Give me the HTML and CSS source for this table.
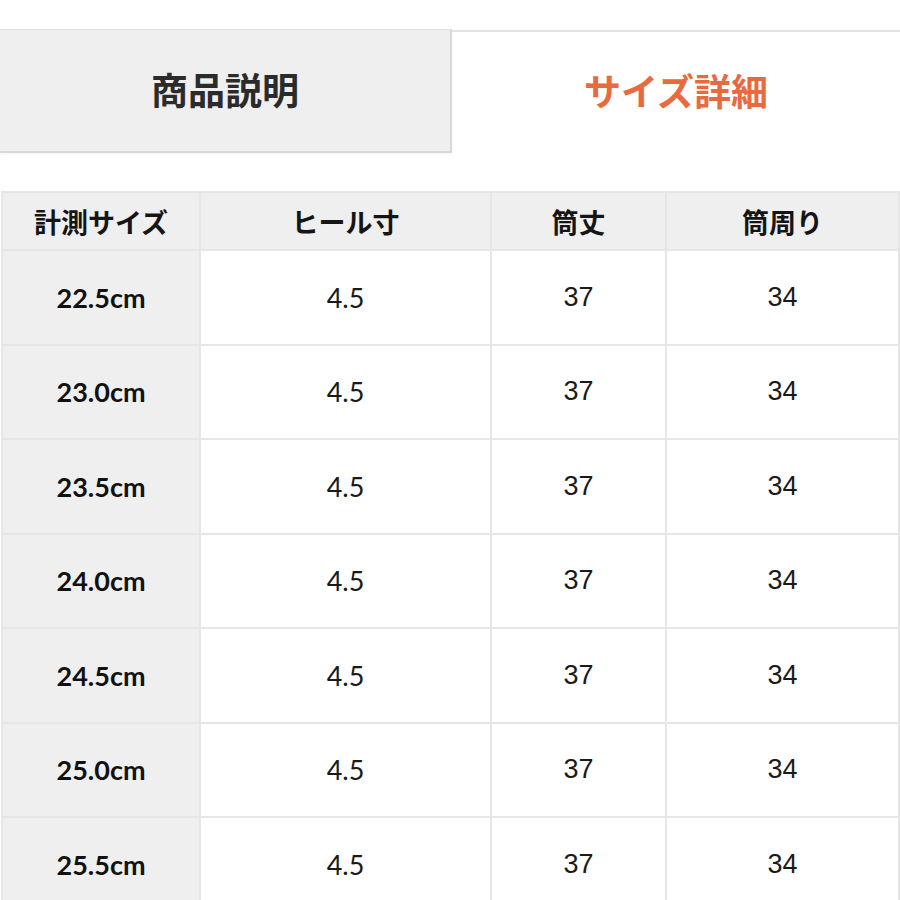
FILE: index.html
```html
<!DOCTYPE html>
<html lang="ja">
<head>
<meta charset="utf-8">
<link rel="stylesheet" href="styles.css">
</head>
<body>
<div class="tabs">
  <div class="tab tab-off">商品説明</div>
  <div class="tab tab-on">サイズ詳細</div>
</div>
<table class="size">
  <colgroup>
    <col class="c1"><col class="c2"><col class="c3"><col class="c4">
  </colgroup>
  <thead>
    <tr><th>計測サイズ</th><th>ヒール寸</th><th>筒丈</th><th>筒周り</th></tr>
  </thead>
  <tbody>
    <tr><th>22.5cm</th><td class="lato">4.5</td><td>37</td><td>34</td></tr>
    <tr><th>23.0cm</th><td class="lato">4.5</td><td>37</td><td>34</td></tr>
    <tr><th>23.5cm</th><td class="lato">4.5</td><td>37</td><td>34</td></tr>
    <tr><th>24.0cm</th><td class="lato">4.5</td><td>37</td><td>34</td></tr>
    <tr><th>24.5cm</th><td class="lato">4.5</td><td>37</td><td>34</td></tr>
    <tr><th>25.0cm</th><td class="lato">4.5</td><td>37</td><td>34</td></tr>
    <tr><th>25.5cm</th><td class="lato">4.5</td><td>37</td><td>34</td></tr>
  </tbody>
</table>
</body>
</html>
```
FILE: styles.css
```css
html, body {
  margin: 0;
  padding: 0;
  background: #fff;
  overflow: hidden;
}
body {
  font-family: "Noto Sans CJK JP", "Noto Sans", sans-serif;
  color: #222;
}
.tabs {
  display: flex;
  margin-top: 29px;
  height: 124px;
}
.tab {
  display: flex;
  align-items: center;
  justify-content: center;
  font-size: 37px;
  font-weight: 700;
  box-sizing: border-box;
  padding-bottom: 4px;
}
.tab-off {
  width: 452px;
  background: #efefef;
  color: #2b2b2b;
  border-top: 1px solid #e2e2e2;
  border-right: 2px solid #d9d9d9;
  border-bottom: 2px solid #d9d9d9;
  box-shadow: 0 1px 2px rgba(0,0,0,0.06);
}
.tab-on {
  flex: 1;
  color: #e96a3f;
  border-top: 2px solid #e2e2e2;
  margin-top: 1px;
  align-self: flex-start;
  height: 123px;
  padding-bottom: 6px;
}
.size {
  margin-top: 38px;
  margin-left: 1px;
  border-collapse: collapse;
  table-layout: fixed;
  width: 897px;
}
.c1 { width: 198px; }
.c2 { width: 291px; }
.c3 { width: 175px; }
.c4 { width: 233px; }
.size th, .size td {
  border: 2px solid #e6e6e6;
  text-align: center;
  padding: 0;
}
.size thead th {
  background: #efefef;
  height: 56px;
  font-size: 27px;
  font-weight: 700;
  color: #151515;
}
.size tbody tr {
  height: 94.5px;
}
.size tbody th {
  background: #efefef;
  font-family: "Lato", "Noto Sans", sans-serif;
  font-weight: 700;
  font-size: 27px;
  color: #111;
}
.size tbody td {
  background: #fff;
  font-family: "Liberation Sans", Arial, sans-serif;
  font-size: 27px;
  color: #1a1a1a;
}
.size tbody td.lato {
  font-family: "Lato", "Noto Sans", sans-serif;
  font-weight: 400;
}
```
